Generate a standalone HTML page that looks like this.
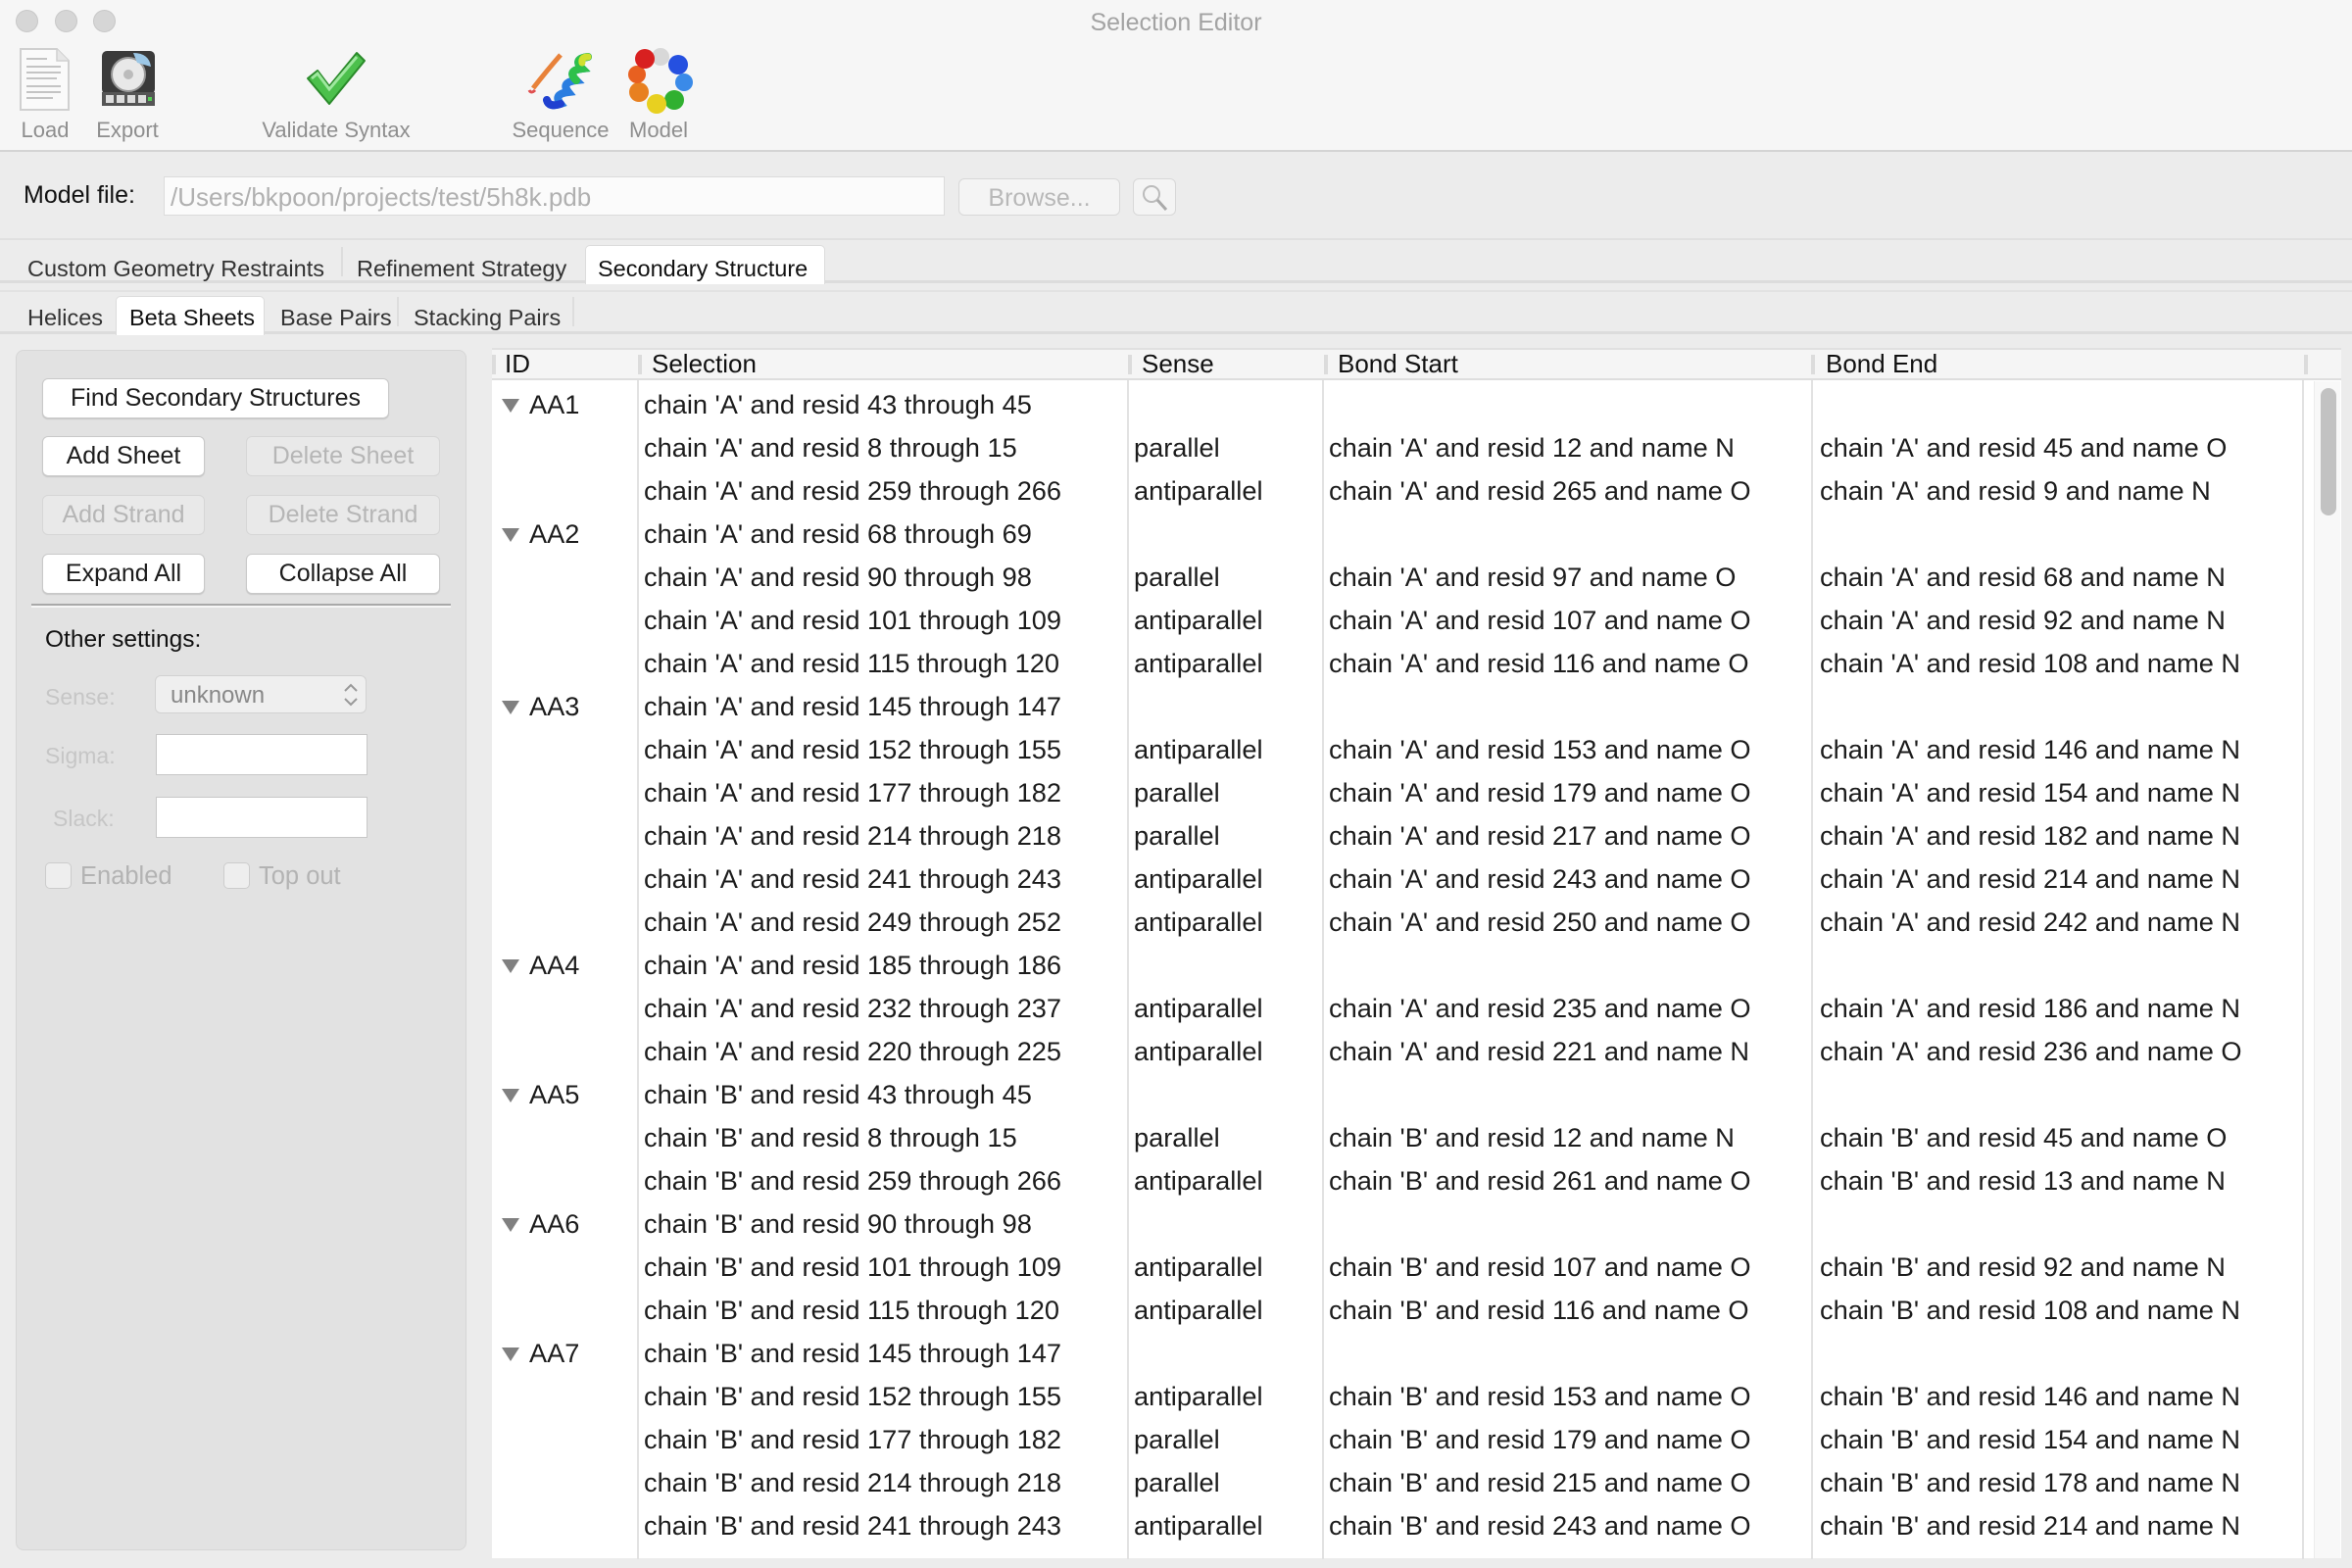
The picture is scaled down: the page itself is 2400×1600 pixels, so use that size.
<!DOCTYPE html>
<html><head><meta charset="utf-8"><style>
*{margin:0;padding:0;box-sizing:border-box}
body{width:2400px;height:1600px;background:#ececec;font-family:"Liberation Sans",Arial,sans-serif;position:relative;overflow:hidden;color:#1c1c1c}
.a{position:absolute;white-space:nowrap}
.top{position:absolute;left:0;top:0;width:2400px;height:155px;background:#f6f6f6;border-bottom:2px solid #d4d4d4}
.tl{position:absolute;top:10px;width:23px;height:23px;border-radius:50%;background:#d6d6d6;border:1px solid #c8c8c8}
.lbl{position:absolute;top:120px;font-size:22px;color:#8e8e8e;transform:translateX(-50%)}
.btn{position:absolute;background:#fff;border:1px solid #c9c9c9;border-radius:6px;box-shadow:0 1px 1px rgba(0,0,0,.12);font-size:25px;text-align:center;line-height:39px;color:#1c1c1c}
.dis{background:#e9e9e9;color:#b6b6b6;border-color:#d6d6d6;box-shadow:none}
.tab{position:absolute;font-size:23.5px;color:#333}
.row{position:absolute;left:0;width:2400px;height:44px;line-height:44px;font-size:27.2px}
.row span{position:absolute;top:0}
.c1{left:540px}.c2{left:657px}.c3{left:1157px}.c4{left:1356px}.c5{left:1857px}
.tri{position:absolute;left:512px;top:16px;width:0;height:0;border-left:9px solid transparent;border-right:9px solid transparent;border-top:14px solid #808080}
.vl{position:absolute;top:388px;height:1203px;width:2px;background:#e2e2e2}
.hs{position:absolute;top:362px;height:20px;width:4px;background:#dcdcdc}
</style></head><body>
<div class="top"></div>
<div class="tl" style="left:16px"></div>
<div class="tl" style="left:56px"></div>
<div class="tl" style="left:95px"></div>
<div class="a" style="left:0;width:2400px;text-align:center;top:9px;font-size:25px;color:#a3a3a3">Selection Editor</div>

<svg class="a" style="left:18px;top:48px" width="56" height="66" viewBox="0 0 56 66">
<path d="M3 2 H40 L52 14 V64 H3 Z" fill="#fafafa" stroke="#d0d0d0" stroke-width="2"/>
<path d="M40 2 V14 H52" fill="#e6e6e6" stroke="#d0d0d0" stroke-width="1.5"/>
<g stroke="#c4c4c4" stroke-width="2"><line x1="9" y1="12" x2="30" y2="12"/><line x1="9" y1="20" x2="44" y2="20"/><line x1="9" y1="26" x2="44" y2="26"/><line x1="9" y1="32" x2="40" y2="32"/><line x1="9" y1="40" x2="44" y2="40"/><line x1="9" y1="46" x2="44" y2="46"/><line x1="9" y1="52" x2="36" y2="52"/></g>
</svg>
<svg class="a" style="left:100px;top:50px" width="62" height="60" viewBox="0 0 62 60">
<rect x="4" y="2" width="54" height="44" rx="5" fill="#3a3a3a"/>
<circle cx="31" cy="26" r="17" fill="#e8e8e8" stroke="#999" stroke-width="2"/>
<circle cx="31" cy="26" r="5" fill="#bbb"/>
<path d="M36 4 Q52 4 54 18 L40 14 Z" fill="#9cc7e6"/>
<rect x="4" y="44" width="54" height="14" fill="#555"/>
<g fill="#ddd"><rect x="8" y="47" width="8" height="8"/><rect x="19" y="47" width="8" height="8"/><rect x="30" y="47" width="8" height="8"/><rect x="41" y="47" width="8" height="8"/></g>
<rect x="51" y="49" width="4" height="4" fill="#5c5"/>
</svg>
<svg class="a" style="left:312px;top:52px" width="62" height="56" viewBox="0 0 62 56">
<path d="M2 28 L12 20 L24 36 L52 2 L60 10 L24 54 Z" fill="#4cc04c" stroke="#2a8a2a" stroke-width="2" stroke-linejoin="round"/>
<path d="M6 28 L12 23 L24 39 L52 6" fill="none" stroke="#9fe89f" stroke-width="3"/>
</svg>
<svg class="a" style="left:538px;top:52px" width="70" height="62" viewBox="0 0 70 62">
<path d="M6 38 Q20 20 34 4" stroke="#e8823a" stroke-width="5" fill="none"/>
<path d="M8 40 Q4 44 2 40" stroke="#e05050" stroke-width="3" fill="none"/>
<path d="M62 6 Q46 8 56 18 Q40 20 50 30 Q34 32 42 42 Q26 44 34 54 Q22 58 20 50" stroke="#2a7de0" stroke-width="8" fill="none" stroke-linecap="round"/>
<path d="M62 6 Q46 8 56 18 Q40 20 50 30" stroke="#2ec04a" stroke-width="8" fill="none" stroke-linecap="round"/>
<path d="M62 6 Q55 6 56 12" stroke="#d0e030" stroke-width="7" fill="none" stroke-linecap="round"/>
<path d="M34 54 Q22 58 20 50" stroke="#2040d0" stroke-width="8" fill="none" stroke-linecap="round"/>
</svg>
<svg class="a" style="left:640px;top:48px" width="68" height="68" viewBox="0 0 68 68">
<circle cx="34" cy="10" r="9" fill="#d8d8d8"/>
<circle cx="52" cy="18" r="10" fill="#2550e0"/>
<circle cx="58" cy="36" r="9" fill="#3a8ae8"/>
<circle cx="48" cy="54" r="10" fill="#30b030"/>
<circle cx="30" cy="58" r="10" fill="#e8d020"/>
<circle cx="12" cy="46" r="10" fill="#e88020"/>
<circle cx="10" cy="28" r="9" fill="#e86020"/>
<circle cx="18" cy="12" r="10" fill="#d82020"/>
</svg>
<div class="lbl" style="left:46px">Load</div>
<div class="lbl" style="left:130px">Export</div>
<div class="lbl" style="left:343px">Validate Syntax</div>
<div class="lbl" style="left:572px">Sequence</div>
<div class="lbl" style="left:672px">Model</div>

<div class="a" style="left:24px;top:185px;font-size:25px;color:#111">Model file:</div>
<div class="a" style="left:167px;top:180px;width:797px;height:40px;background:#fbfbfb;border:1px solid #dcdcdc;font-size:26px;color:#b0b0b0;line-height:40px;padding-left:6px">/Users/bkpoon/projects/test/5h8k.pdb</div>
<div class="a" style="left:978px;top:182px;width:165px;height:38px;background:#f4f4f4;border:1px solid #d8d8d8;border-radius:6px;font-size:25px;color:#b8b8b8;text-align:center;line-height:38px">Browse...</div>
<div class="a" style="left:1156px;top:182px;width:44px;height:38px;background:#f4f4f4;border:1px solid #d8d8d8;border-radius:6px"></div>
<svg class="a" style="left:1162px;top:187px" width="34" height="30" viewBox="0 0 34 30"><circle cx="13" cy="11" r="8" fill="none" stroke="#bbb" stroke-width="2"/><line x1="19" y1="17" x2="28" y2="27" stroke="#aaa" stroke-width="3"/></svg>

<div class="a" style="left:0;top:243px;width:2400px;height:46px;border-top:2px solid #e0e0e0;border-bottom:3px solid #dcdcdc"></div>
<div class="a" style="left:597px;top:250px;width:245px;height:40px;background:#fff;border:1px solid #dcdcdc;border-bottom:none;border-radius:5px 5px 0 0"></div>
<div class="a" style="left:348px;top:252px;width:2px;height:30px;background:#ddd"></div>
<div class="tab" style="left:28px;top:261px">Custom Geometry Restraints</div>
<div class="tab" style="left:364px;top:261px">Refinement Strategy</div>
<div class="tab" style="left:610px;top:261px;color:#111">Secondary Structure</div>

<div class="a" style="left:0;top:296px;width:2400px;height:45px;border-top:2px solid #e2e2e2;border-bottom:3px solid #dcdcdc"></div>
<div class="a" style="left:118px;top:302px;width:152px;height:40px;background:#fff;border:1px solid #dcdcdc;border-bottom:none;border-radius:5px 5px 0 0"></div>
<div class="a" style="left:405px;top:303px;width:2px;height:30px;background:#ddd"></div>
<div class="a" style="left:584px;top:303px;width:2px;height:30px;background:#ddd"></div>
<div class="tab" style="left:28px;top:311px">Helices</div>
<div class="tab" style="left:132px;top:311px;color:#111">Beta Sheets</div>
<div class="tab" style="left:286px;top:311px">Base Pairs</div>
<div class="tab" style="left:422px;top:311px">Stacking Pairs</div>

<div class="a" style="left:16px;top:357px;width:460px;height:1225px;background:#e2e2e2;border:1px solid #d6d6d6;border-radius:8px"></div>
<div class="btn" style="left:43px;top:386px;width:354px;height:41px">Find Secondary Structures</div>
<div class="btn" style="left:43px;top:445px;width:166px;height:41px">Add Sheet</div>
<div class="btn dis" style="left:251px;top:445px;width:198px;height:41px">Delete Sheet</div>
<div class="btn dis" style="left:43px;top:505px;width:166px;height:41px">Add Strand</div>
<div class="btn dis" style="left:251px;top:505px;width:198px;height:41px">Delete Strand</div>
<div class="btn" style="left:43px;top:565px;width:166px;height:41px">Expand All</div>
<div class="btn" style="left:251px;top:565px;width:198px;height:41px">Collapse All</div>
<div class="a" style="left:32px;top:616px;width:428px;height:2px;background:#a9a9a9"></div>
<div class="a" style="left:32px;top:618px;width:428px;height:2px;background:#f6f6f6"></div>
<div class="a" style="left:46px;top:639px;font-size:24.5px;color:#111">Other settings:</div>
<div class="a" style="left:46px;top:698px;font-size:23px;color:#c6c6c6">Sense:</div>
<div class="a" style="left:158px;top:689px;width:216px;height:39px;background:#efefef;border:1px solid #d2d2d2;border-radius:6px;font-size:24px;color:#888;line-height:39px;padding-left:15px">unknown</div>
<svg class="a" style="left:348px;top:695px" width="20" height="28" viewBox="0 0 20 28"><path d="M4 10 L10 4 L16 10 M4 18 L10 24 L16 18" fill="none" stroke="#999" stroke-width="2"/></svg>
<div class="a" style="left:46px;top:758px;font-size:23px;color:#c6c6c6">Sigma:</div>
<div class="a" style="left:159px;top:749px;width:216px;height:42px;background:#fff;border:1px solid #c8c8c8"></div>
<div class="a" style="left:54px;top:822px;font-size:23px;color:#c6c6c6">Slack:</div>
<div class="a" style="left:159px;top:813px;width:216px;height:42px;background:#fff;border:1px solid #c8c8c8"></div>
<div class="a" style="left:46px;top:880px;width:27px;height:27px;background:#eee;border:1px solid #ccc;border-radius:5px"></div>
<div class="a" style="left:82px;top:880px;font-size:25.5px;color:#b3b3b3">Enabled</div>
<div class="a" style="left:228px;top:880px;width:27px;height:27px;background:#eee;border:1px solid #ccc;border-radius:5px"></div>
<div class="a" style="left:264px;top:880px;font-size:25.5px;color:#b3b3b3">Top out</div>

<div class="a" style="left:502px;top:355px;width:1887px;height:1235px;background:#fff;border-top:2px solid #e0e0e0"></div>
<div class="a" style="left:502px;top:357px;width:1887px;height:31px;background:#f5f5f5;border-bottom:2px solid #dedede"></div>
<div class="hs" style="left:502px"></div><div class="hs" style="left:651px"></div><div class="hs" style="left:1151px"></div><div class="hs" style="left:1351px"></div><div class="hs" style="left:1848px"></div><div class="hs" style="left:2351px"></div>
<div class="a" style="left:515px;top:354px;font-size:26px;line-height:34px;color:#111">ID</div>
<div class="a" style="left:665px;top:354px;font-size:26px;line-height:34px;color:#111">Selection</div>
<div class="a" style="left:1165px;top:354px;font-size:26px;line-height:34px;color:#111">Sense</div>
<div class="a" style="left:1365px;top:354px;font-size:26px;line-height:34px;color:#111">Bond Start</div>
<div class="a" style="left:1863px;top:354px;font-size:26px;line-height:34px;color:#111">Bond End</div>
<div class="vl" style="left:650px"></div><div class="vl" style="left:1150px"></div><div class="vl" style="left:1349px"></div><div class="vl" style="left:1848px"></div><div class="vl" style="left:2349px"></div>
<div class="a" style="left:2361px;top:389px;width:27px;height:1201px;background:#f8f8f8;border-left:1px solid #ececec"></div>
<div class="a" style="left:2368px;top:396px;width:16px;height:130px;background:#c2c2c2;border-radius:8px"></div>

<div style="position:absolute;left:0;top:391px">
<div class="row" style="top:0"><i class="tri"></i><span class="c1">AA1</span><span class="c2">chain 'A' and resid 43 through 45</span></div>
<div class="row" style="top:44px"><span class="c2">chain 'A' and resid 8 through 15</span><span class="c3">parallel</span><span class="c4">chain 'A' and resid 12 and name N</span><span class="c5">chain 'A' and resid 45 and name O</span></div>
<div class="row" style="top:88px"><span class="c2">chain 'A' and resid 259 through 266</span><span class="c3">antiparallel</span><span class="c4">chain 'A' and resid 265 and name O</span><span class="c5">chain 'A' and resid 9 and name N</span></div>
<div class="row" style="top:132px"><i class="tri"></i><span class="c1">AA2</span><span class="c2">chain 'A' and resid 68 through 69</span></div>
<div class="row" style="top:176px"><span class="c2">chain 'A' and resid 90 through 98</span><span class="c3">parallel</span><span class="c4">chain 'A' and resid 97 and name O</span><span class="c5">chain 'A' and resid 68 and name N</span></div>
<div class="row" style="top:220px"><span class="c2">chain 'A' and resid 101 through 109</span><span class="c3">antiparallel</span><span class="c4">chain 'A' and resid 107 and name O</span><span class="c5">chain 'A' and resid 92 and name N</span></div>
<div class="row" style="top:264px"><span class="c2">chain 'A' and resid 115 through 120</span><span class="c3">antiparallel</span><span class="c4">chain 'A' and resid 116 and name O</span><span class="c5">chain 'A' and resid 108 and name N</span></div>
<div class="row" style="top:308px"><i class="tri"></i><span class="c1">AA3</span><span class="c2">chain 'A' and resid 145 through 147</span></div>
<div class="row" style="top:352px"><span class="c2">chain 'A' and resid 152 through 155</span><span class="c3">antiparallel</span><span class="c4">chain 'A' and resid 153 and name O</span><span class="c5">chain 'A' and resid 146 and name N</span></div>
<div class="row" style="top:396px"><span class="c2">chain 'A' and resid 177 through 182</span><span class="c3">parallel</span><span class="c4">chain 'A' and resid 179 and name O</span><span class="c5">chain 'A' and resid 154 and name N</span></div>
<div class="row" style="top:440px"><span class="c2">chain 'A' and resid 214 through 218</span><span class="c3">parallel</span><span class="c4">chain 'A' and resid 217 and name O</span><span class="c5">chain 'A' and resid 182 and name N</span></div>
<div class="row" style="top:484px"><span class="c2">chain 'A' and resid 241 through 243</span><span class="c3">antiparallel</span><span class="c4">chain 'A' and resid 243 and name O</span><span class="c5">chain 'A' and resid 214 and name N</span></div>
<div class="row" style="top:528px"><span class="c2">chain 'A' and resid 249 through 252</span><span class="c3">antiparallel</span><span class="c4">chain 'A' and resid 250 and name O</span><span class="c5">chain 'A' and resid 242 and name N</span></div>
<div class="row" style="top:572px"><i class="tri"></i><span class="c1">AA4</span><span class="c2">chain 'A' and resid 185 through 186</span></div>
<div class="row" style="top:616px"><span class="c2">chain 'A' and resid 232 through 237</span><span class="c3">antiparallel</span><span class="c4">chain 'A' and resid 235 and name O</span><span class="c5">chain 'A' and resid 186 and name N</span></div>
<div class="row" style="top:660px"><span class="c2">chain 'A' and resid 220 through 225</span><span class="c3">antiparallel</span><span class="c4">chain 'A' and resid 221 and name N</span><span class="c5">chain 'A' and resid 236 and name O</span></div>
<div class="row" style="top:704px"><i class="tri"></i><span class="c1">AA5</span><span class="c2">chain 'B' and resid 43 through 45</span></div>
<div class="row" style="top:748px"><span class="c2">chain 'B' and resid 8 through 15</span><span class="c3">parallel</span><span class="c4">chain 'B' and resid 12 and name N</span><span class="c5">chain 'B' and resid 45 and name O</span></div>
<div class="row" style="top:792px"><span class="c2">chain 'B' and resid 259 through 266</span><span class="c3">antiparallel</span><span class="c4">chain 'B' and resid 261 and name O</span><span class="c5">chain 'B' and resid 13 and name N</span></div>
<div class="row" style="top:836px"><i class="tri"></i><span class="c1">AA6</span><span class="c2">chain 'B' and resid 90 through 98</span></div>
<div class="row" style="top:880px"><span class="c2">chain 'B' and resid 101 through 109</span><span class="c3">antiparallel</span><span class="c4">chain 'B' and resid 107 and name O</span><span class="c5">chain 'B' and resid 92 and name N</span></div>
<div class="row" style="top:924px"><span class="c2">chain 'B' and resid 115 through 120</span><span class="c3">antiparallel</span><span class="c4">chain 'B' and resid 116 and name O</span><span class="c5">chain 'B' and resid 108 and name N</span></div>
<div class="row" style="top:968px"><i class="tri"></i><span class="c1">AA7</span><span class="c2">chain 'B' and resid 145 through 147</span></div>
<div class="row" style="top:1012px"><span class="c2">chain 'B' and resid 152 through 155</span><span class="c3">antiparallel</span><span class="c4">chain 'B' and resid 153 and name O</span><span class="c5">chain 'B' and resid 146 and name N</span></div>
<div class="row" style="top:1056px"><span class="c2">chain 'B' and resid 177 through 182</span><span class="c3">parallel</span><span class="c4">chain 'B' and resid 179 and name O</span><span class="c5">chain 'B' and resid 154 and name N</span></div>
<div class="row" style="top:1100px"><span class="c2">chain 'B' and resid 214 through 218</span><span class="c3">parallel</span><span class="c4">chain 'B' and resid 215 and name O</span><span class="c5">chain 'B' and resid 178 and name N</span></div>
<div class="row" style="top:1144px"><span class="c2">chain 'B' and resid 241 through 243</span><span class="c3">antiparallel</span><span class="c4">chain 'B' and resid 243 and name O</span><span class="c5">chain 'B' and resid 214 and name N</span></div>
</div>
</body></html>
